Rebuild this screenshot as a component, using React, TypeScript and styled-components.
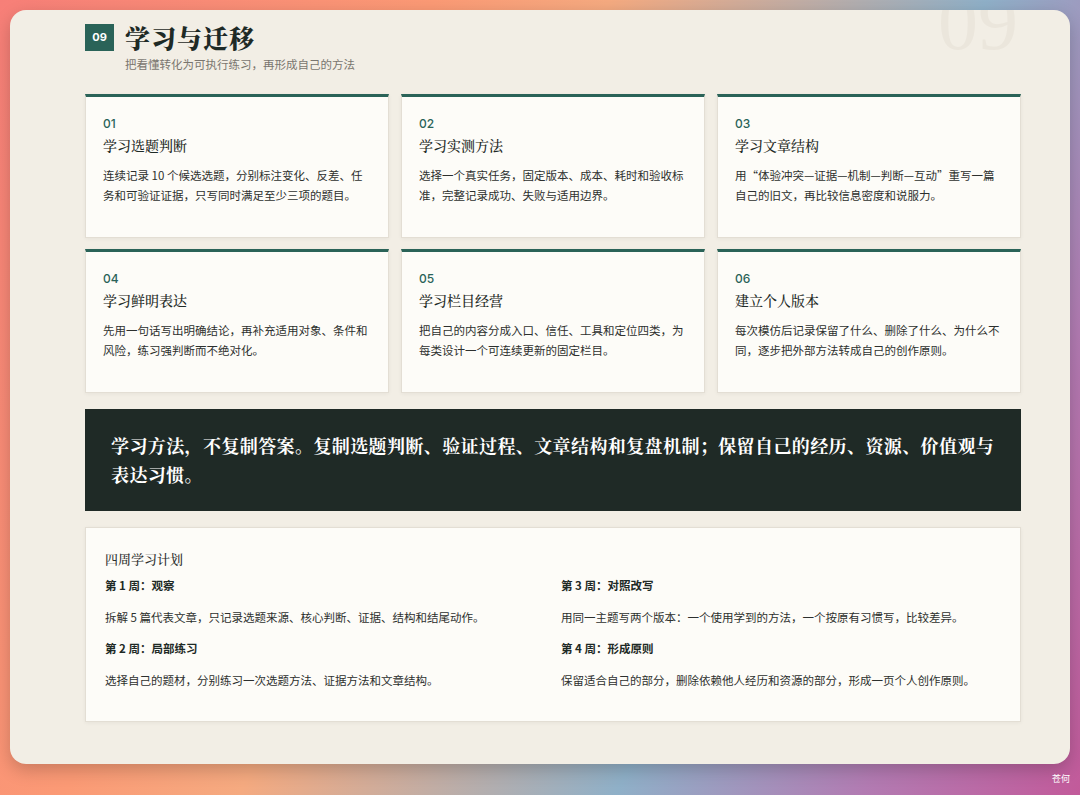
import * as React from "react";
import styled, { createGlobalStyle } from "styled-components";

const Global = createGlobalStyle`
  html, body { margin: 0; padding: 0; }
  body {
    width: 1080px; height: 795px; overflow: hidden;
    font-family: "Noto Sans CJK SC", "Noto Sans", sans-serif;
    background: linear-gradient(115deg, #f77f78 0%, #fb9a75 30%, #f5aa80 42%, #8fb0c8 68%, #b27bb2 85%, #c25a9a 100%);
  }
`

const Stage = styled.div`
  position: relative;
  width: 1080px;
  height: 795px;
  padding: 10px;
  box-sizing: border-box;
`

const Sheet = styled.div`
  position: relative;
  overflow: hidden;
  height: 754px;
  background: #f2eee5;
  border-radius: 16px;
  box-shadow: 0 6px 18px rgba(0, 0, 0, 0.2);
  padding: 12px 49px 0 75px;
  box-sizing: border-box;
`

const Watermark = styled.div`
  position: absolute;
  top: -28px;
  right: 52px;
  font-family: "Liberation Serif", serif;
  font-size: 80px;
  color: #ebe6dc;
  line-height: 1;
`

const Header = styled.div`
  display: flex;
  align-items: center;
  gap: 11px;
  height: 30px;
`

const Badge = styled.div`
  width: 29px; height: 27px;
  background: #2a6358;
  color: white;
  font-family: "Inter", sans-serif;
  font-weight: 700;
  font-size: 11px;
  display: flex; align-items: center; justify-content: center;
`

const Title = styled.h1`
  margin: 0;
  font-family: "Noto Serif CJK SC", "Noto Sans CJK SC", serif;
  font-weight: 900;
  font-size: 25px;
  color: #1e2a26;
  letter-spacing: 1px;
`

const Subtitle = styled.div`
  margin: 4px 0 0 40px;
  font-size: 11.5px;
  color: #7a766f;
`

const Grid = styled.div`
  display: grid;
  grid-template-columns: repeat(3, 1fr);
  gap: 11px 12px;
  margin-top: 22px;
`

const Card = styled.div`
  background: #fdfcf8;
  border: 1px solid #e3ded4;
  border-top: 3px solid #2a6358;
  height: 144px;
  box-sizing: border-box;
  padding: 19px 17px 0;
  box-shadow: 0 1px 4px rgba(0,0,0,0.05);
`

const Num = styled.div`
  font-family: "Inter", sans-serif;
  font-size: 12px;
  font-weight: 500;
  color: #2a6358;
`

const CardTitle = styled.div`
  margin-top: 4px;
  font-family: "Noto Serif CJK SC", "Noto Sans CJK SC", serif;
  font-size: 14px;
  font-weight: 500;
  color: #1e2a26;
`

const CardText = styled.div`
  margin-top: 10px;
  font-size: 11.5px;
  line-height: 20px;
  color: #2d302e;
`

const Banner = styled.div`
  margin-top: 16px;
  background: #1f2a26;
  height: 102px;
  box-sizing: border-box;
  padding: 22px 26px;
  color: #fff;
  font-family: "Noto Serif CJK SC", "Noto Sans CJK SC", serif;
  font-weight: 700;
  font-size: 18px;
  letter-spacing: 0.4px;
  line-height: 29px;
`

const Plan = styled.div`
  margin-top: 16px;
  background: #fdfcf8;
  border: 1px solid #e3ded4;
  height: 195px;
  box-sizing: border-box;
  padding: 21px 19px 0;
  box-shadow: 0 1px 4px rgba(0,0,0,0.05);
`

const PlanTitle = styled.div`
  font-family: "Noto Serif CJK SC", "Noto Sans CJK SC", serif;
  font-size: 13px;
  font-weight: 500;
  color: #2d302e;
`

const PlanGrid = styled.div`
  display: grid;
  grid-template-columns: 456px 1fr;
  margin-top: 9px;
`

const Week = styled.div`
  font-size: 11.5px;
  font-weight: 700;
  color: #1e2a26;
  height: 23px;
`

const WeekText = styled.div`
  font-size: 11.5px;
  color: #2d302e;
  margin: 9px 0 0;
  height: 31px;
`

const Signature = styled.div`
  position: absolute;
  right: 10px;
  bottom: 10px;
  font-size: 9px;
  color: #fff;
`

const cards = [
  ["01", "学习选题判断", "连续记录 10 个候选选题，分别标注变化、反差、任务和可验证证据，只写同时满足至少三项的题目。"],
  ["02", "学习实测方法", "选择一个真实任务，固定版本、成本、耗时和验收标准，完整记录成功、失败与适用边界。"],
  ["03", "学习文章结构", "用“体验冲突—证据—机制—判断—互动”重写一篇自己的旧文，再比较信息密度和说服力。"],
  ["04", "学习鲜明表达", "先用一句话写出明确结论，再补充适用对象、条件和风险，练习强判断而不绝对化。"],
  ["05", "学习栏目经营", "把自己的内容分成入口、信任、工具和定位四类，为每类设计一个可连续更新的固定栏目。"],
  ["06", "建立个人版本", "每次模仿后记录保留了什么、删除了什么、为什么不同，逐步把外部方法转成自己的创作原则。"],
]

const weeks = [
  [["第 1 周：观察", "拆解 5 篇代表文章，只记录选题来源、核心判断、证据、结构和结尾动作。"],
   ["第 2 周：局部练习", "选择自己的题材，分别练习一次选题方法、证据方法和文章结构。"]],
  [["第 3 周：对照改写", "用同一主题写两个版本：一个使用学到的方法，一个按原有习惯写，比较差异。"],
   ["第 4 周：形成原则", "保留适合自己的部分，删除依赖他人经历和资源的部分，形成一页个人创作原则。"]],
]

export default function App() {
  return (
    <Stage>
      <Global />
      <Sheet>
        <Watermark>09</Watermark>
        <Header>
          <Badge>09</Badge>
          <Title>学习与迁移</Title>
        </Header>
        <Subtitle>把看懂转化为可执行练习，再形成自己的方法</Subtitle>
        <Grid>
          {cards.map(([n, t, d]) => (
            <Card key={n}>
              <Num>{n}</Num>
              <CardTitle>{t}</CardTitle>
              <CardText>{d}</CardText>
            </Card>
          ))}
        </Grid>
        <Banner>学习方法，不复制答案。复制选题判断、验证过程、文章结构和复盘机制；保留自己的经历、资源、价值观与表达习惯。</Banner>
        <Plan>
          <PlanTitle>四周学习计划</PlanTitle>
          <PlanGrid>
            {weeks.map((col, i) => (
              <div key={i}>
                {col.map(([h, t]) => (
                  <React.Fragment key={h}>
                    <Week>{h}</Week>
                    <WeekText>{t}</WeekText>
                  </React.Fragment>
                ))}
              </div>
            ))}
          </PlanGrid>
        </Plan>
      </Sheet>
      <Signature>苍何</Signature>
    </Stage>
  )
}
